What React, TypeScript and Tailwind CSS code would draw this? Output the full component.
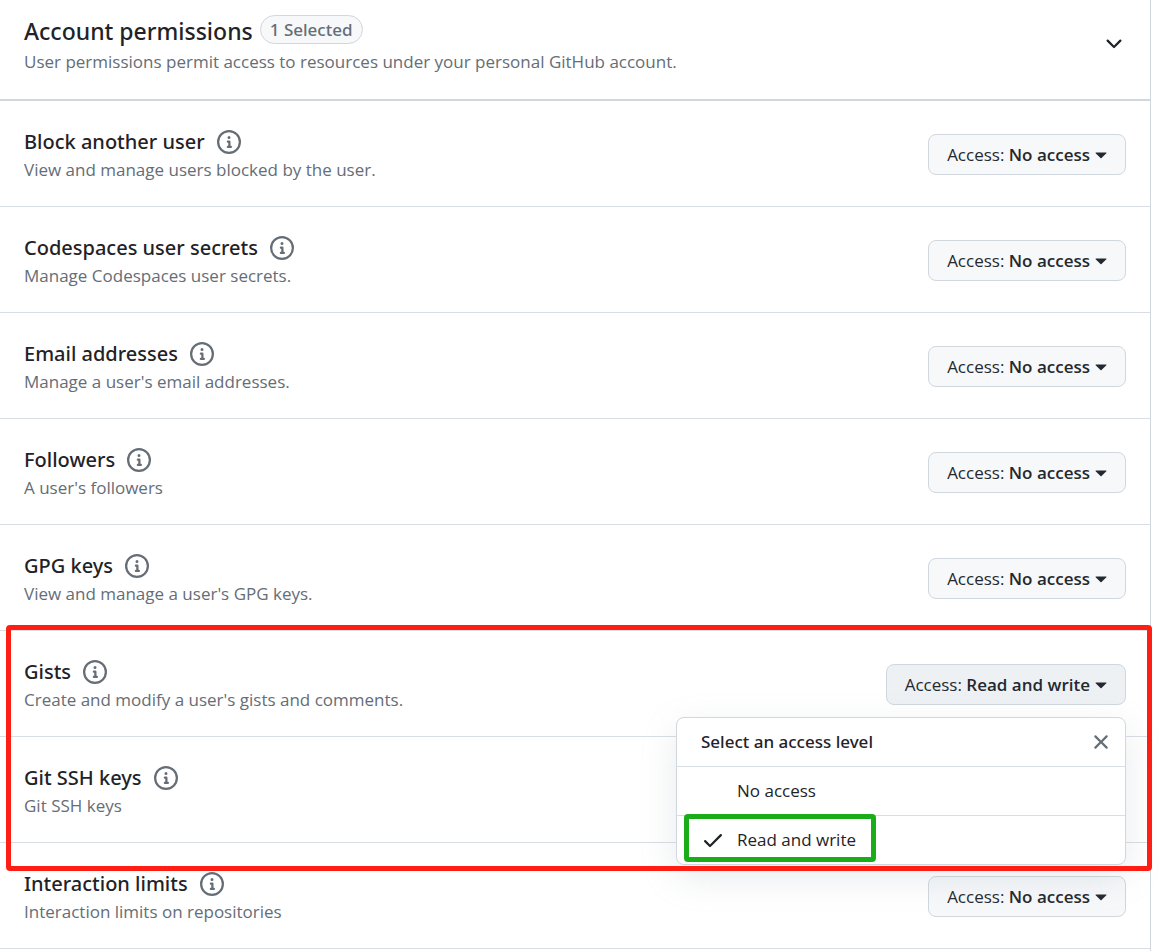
import { useState } from 'react'

type IconProps = {
  path: string
  className?: string
}

function Icon({ path, className = '' }: IconProps) {
  return (
    <svg viewBox="0 0 16 16" className={`h-6 w-6 shrink-0 ${className}`} fill="currentColor" aria-hidden="true">
      <path d={path} />
    </svg>
  )
}

const icons = {
  info: 'M0 8a8 8 0 1 1 16 0A8 8 0 0 1 0 8Zm8-6.5a6.5 6.5 0 1 0 0 13 6.5 6.5 0 0 0 0-13ZM6.5 7.75A.75.75 0 0 1 7.25 7h1a.75.75 0 0 1 .75.75v2.75h.25a.75.75 0 0 1 0 1.5h-2a.75.75 0 0 1 0-1.5h.25v-2h-.25a.75.75 0 0 1-.75-.75ZM8 6a1 1 0 1 1 0-2 1 1 0 0 1 0 2Z',
  chevron:
    'M12.78 5.22a.749.749 0 0 1 0 1.06l-4.25 4.25a.749.749 0 0 1-1.06 0L3.22 6.28a.749.749 0 1 1 1.06-1.06L8 8.939l3.72-3.719a.749.749 0 0 1 1.06 0Z',
  triangle:
    'm4.427 7.427 3.396 3.396a.25.25 0 0 0 .354 0l3.396-3.396A.25.25 0 0 0 11.396 7H4.604a.25.25 0 0 0-.177.427Z',
  close:
    'M3.72 3.72a.75.75 0 0 1 1.06 0L8 6.94l3.22-3.22a.749.749 0 0 1 1.275.326.749.749 0 0 1-.215.734L9.06 8l3.22 3.22a.749.749 0 0 1-.326 1.275.749.749 0 0 1-.734-.215L8 9.06l-3.22 3.22a.751.751 0 0 1-1.042-.018.751.751 0 0 1-.018-1.042L6.94 8 3.72 4.78a.75.75 0 0 1 0-1.06Z',
  check:
    'M13.78 4.22a.75.75 0 0 1 0 1.06l-7.25 7.25a.75.75 0 0 1-1.06 0L2.22 9.28a.751.751 0 0 1 .018-1.042.751.751 0 0 1 1.042-.018L6 10.94l6.72-6.72a.75.75 0 0 1 1.06 0Z',
}

type Permission = {
  name: string
  description: string
}

const before: Permission[] = [
  { name: 'Block another user', description: 'View and manage users blocked by the user.' },
  { name: 'Codespaces user secrets', description: 'Manage Codespaces user secrets.' },
  { name: 'Email addresses', description: "Manage a user's email addresses." },
  { name: 'Followers', description: "A user's followers" },
  { name: 'GPG keys', description: "View and manage a user's GPG keys." },
]

const levels = ['No access', 'Read and write']

function App() {
  const [gists, setGists] = useState('Read and write')
  const [open, setOpen] = useState(true)

  return (
    <div className="overflow-x-hidden bg-white font-['Open_Sans','Noto_Sans',sans-serif] text-[#1f2328]">
      <main className="mr-2 min-h-screen border-r border-[#d0d7de]">
        <header className="flex items-start justify-between border-b-2 border-[#d0d7de] px-6 pt-[15px] pb-[23px]">
          <div>
            <div className="flex gap-[7px]">
              <h2 className="font-['Noto_Sans',sans-serif] text-[23px] leading-8 font-medium">Account permissions</h2>
              <span className="flex h-[29px] items-center rounded-full border border-[#d0d7de] bg-[#f6f8fa] px-[9px] font-['Noto_Sans',sans-serif] text-[17px] font-medium text-[#656d76]">
                1 Selected
              </span>
            </div>
            <p className="text-[17px] leading-[29px] text-[#656d76]">
              User permissions permit access to resources under your personal GitHub account.
            </p>
          </div>
          <button type="button" aria-label="Collapse account permissions" className="mt-[17px]">
            <Icon path={icons.chevron} />
          </button>
        </header>

        {before.map((item) => (
          <PermissionRow key={item.name} {...item}>
            <AccessButton name={item.name} level="No access" />
          </PermissionRow>
        ))}

        <div className="relative">
          <PermissionRow name="Gists" description="Create and modify a user's gists and comments.">
            <div className="relative">
              <AccessButton name="Gists" level={gists} open={open} onClick={() => setOpen(!open)} />
              {open ? (
                <AccessMenu level={gists} onSelect={setGists} onClose={() => setOpen(false)} />
              ) : null}
            </div>
          </PermissionRow>
          <PermissionRow name="Git SSH keys" description="Git SSH keys" />
          <div className="pointer-events-none absolute -top-[6px] -right-[2px] -bottom-7 left-[6px] z-20 rounded-[4px] border-[5px] border-[#ff1e14]" />
        </div>

        <PermissionRow name="Interaction limits" description="Interaction limits on repositories">
          <AccessButton name="Interaction limits" level="No access" />
        </PermissionRow>
      </main>
    </div>
  )
}

type PermissionRowProps = Permission & {
  children?: React.ReactNode
}

function PermissionRow({ name, description, children }: PermissionRowProps) {
  return (
    <section className="flex h-[106px] items-center justify-between border-b border-[#d8dee4] px-6 pt-[2px]">
      <div className="pt-[2px]">
        <div className="flex items-center gap-3">
          <h3 className="font-['Noto_Sans',sans-serif] text-[20px] leading-7 font-medium">{name}</h3>
          <button type="button" aria-label={`About ${name}`} className="text-[#656d76]">
            <Icon path={icons.info} />
          </button>
        </div>
        <p className="text-[17px] leading-7 text-[#656d76]">{description}</p>
      </div>
      {children}
    </section>
  )
}

type AccessButtonProps = {
  name: string
  level: string
  open?: boolean
  onClick?: () => void
}

function AccessButton({ name, level, open = false, onClick }: AccessButtonProps) {
  return (
    <button
      type="button"
      aria-label={`${name} access: ${level}`}
      aria-haspopup="menu"
      aria-expanded={open}
      onClick={onClick}
      className={`flex h-[41px] items-center rounded-lg border border-[#d0d7de] pr-3 pl-[18px] text-[17px] text-[#24292f] ${open ? 'bg-[#eef1f4]' : 'bg-[#f6f8fa]'}`}
    >
      <span>
        Access: <span className="font-semibold">{level}</span>
      </span>
      <Icon path={icons.triangle} className="mb-[2px] -ml-px" />
    </button>
  )
}

type AccessMenuProps = {
  level: string
  onSelect: (level: string) => void
  onClose: () => void
}

function AccessMenu({ level, onSelect, onClose }: AccessMenuProps) {
  return (
    <div
      role="menu"
      className="absolute top-full right-0 z-10 mt-3 w-[450px] rounded-lg border border-[#d0d7de] bg-white text-[17px] shadow-[0_12px_36px_rgba(140,149,159,0.2)]"
    >
      <div className="flex h-12 items-center justify-between pr-3 pl-6">
        <span className="font-['Noto_Sans',sans-serif] font-medium">Select an access level</span>
        <button type="button" aria-label="Close menu" onClick={onClose} className="text-[#656d76]">
          <Icon path={icons.close} />
        </button>
      </div>
      {levels.map((item) => (
        <button
          key={item}
          type="button"
          role="menuitemradio"
          aria-checked={item === level}
          onClick={() => onSelect(item)}
          className="relative flex h-[49px] w-full items-center gap-3 border-t border-[#d8dee4] pl-6"
        >
          <Icon path={icons.check} className={item === level ? '' : 'invisible'} />
          <span>{item}</span>
          {item === level ? (
            <span className="pointer-events-none absolute -top-[2px] left-[7px] h-12 w-48 rounded-[4px] border-[5px] border-[#1aad19]" />
          ) : null}
        </button>
      ))}
    </div>
  )
}

export default App
